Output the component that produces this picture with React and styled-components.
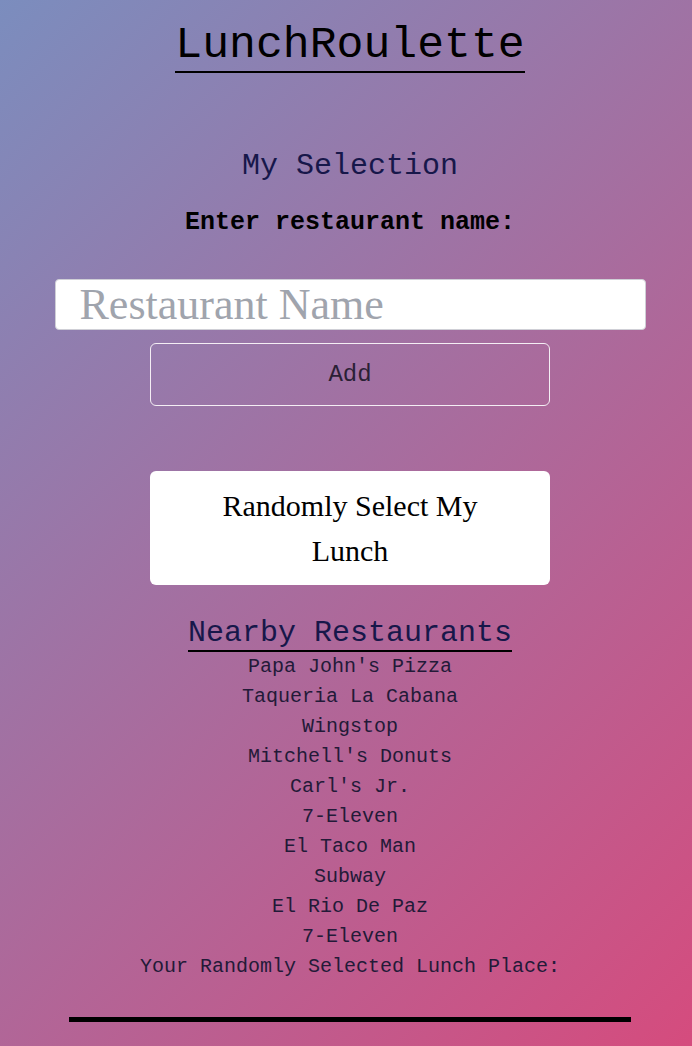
import React from 'react'
import styled, { createGlobalStyle } from 'styled-components'

const restaurants = [
	"Papa John's Pizza",
	'Taqueria La Cabana',
	'Wingstop',
	"Mitchell's Donuts",
	"Carl's Jr.",
	'7-Eleven',
	'El Taco Man',
	'Subway',
	'El Rio De Paz',
	'7-Eleven',
]

const App = () => {
	return (
		<>
			<GlobalStyle />
			<Page>
				<Title>LunchRoulette</Title>
				<Heading $top='76.5px'>My Selection</Heading>
				<Label htmlFor='restaurant'>Enter restaurant name:</Label>
				<NameInput id='restaurant' type='text' placeholder='Restaurant Name' />
				<AddButton type='button'>Add</AddButton>
				<RandomButton type='button'>Randomly Select My Lunch</RandomButton>
				<Heading $top='30.7px' $underline>
					Nearby Restaurants
				</Heading>
				<List>
					{restaurants.map((name, i) => (
						<li key={i}>{name}</li>
					))}
				</List>
				<Result>Your Randomly Selected Lunch Place:</Result>
				<Divider />
			</Page>
		</>
	)
}

const GlobalStyle = createGlobalStyle`
	html, body {
		margin: 0;
		padding: 0;
	}
	body {
		font-family: 'Liberation Mono', 'Courier New', monospace;
	}
`

const Page = styled.div`
	box-sizing: border-box;
	min-height: 100vh;
	padding: 0 0 40px 8px;
	display: flex;
	flex-direction: column;
	align-items: center;
	background: linear-gradient(135deg, #7b8dbe 0%, #d64b7d 100%);
	font-family: 'Liberation Mono', 'Courier New', monospace;
`

const Title = styled.h1`
	margin: 20px 0 0;
	font-size: 44.8px;
	font-weight: normal;
	line-height: 50.8px;
	color: #000;
	border-bottom: 2px solid #000;
`

const Heading = styled.h2`
	margin: ${(p) => p.$top} 0 0;
	font-size: 30px;
	font-weight: normal;
	line-height: 34px;
	color: #17174a;
	border-bottom: ${(p) => (p.$underline ? '2px solid #000' : 'none')};
`

const Label = styled.label`
	margin-top: 26px;
	font-size: 25px;
	font-weight: bold;
	line-height: 28.3px;
	color: #000;
`

const NameInput = styled.input`
	box-sizing: border-box;
	width: 591px;
	height: 51px;
	margin-top: 41.5px;
	padding: 0 24px;
	border: 1px solid #cfcfd6;
	border-radius: 4px;
	background: #fff;
	font-family: 'Liberation Serif', 'Times New Roman', serif;
	font-size: 44px;
	outline: none;

	&::placeholder {
		color: #a0a4ad;
	}
`

const AddButton = styled.button`
	box-sizing: border-box;
	width: 400px;
	height: 63px;
	margin-top: 13px;
	border: 1px solid #f4eef4;
	border-radius: 6px;
	background: transparent;
	font-family: 'Liberation Mono', 'Courier New', monospace;
	font-size: 24px;
	color: #2a1f35;
	cursor: pointer;
`

const RandomButton = styled.button`
	box-sizing: border-box;
	width: 400px;
	margin-top: 65px;
	padding: 12px 50px;
	border: none;
	border-radius: 6px;
	background: #fff;
	font-family: 'Liberation Serif', 'Times New Roman', serif;
	font-size: 30px;
	line-height: 45px;
	color: #000;
	cursor: pointer;
`

const List = styled.ul`
	margin: 0;
	padding: 0;
	list-style: none;
	text-align: center;

	li {
		font-size: 20px;
		line-height: 30px;
		color: #231a38;
	}
`

const Result = styled.p`
	margin: 0;
	font-size: 20px;
	line-height: 30px;
	color: #231a38;
`

const Divider = styled.div`
	width: 562px;
	margin-top: 35px;
	border-top: 5px solid #000;
`

export default App
